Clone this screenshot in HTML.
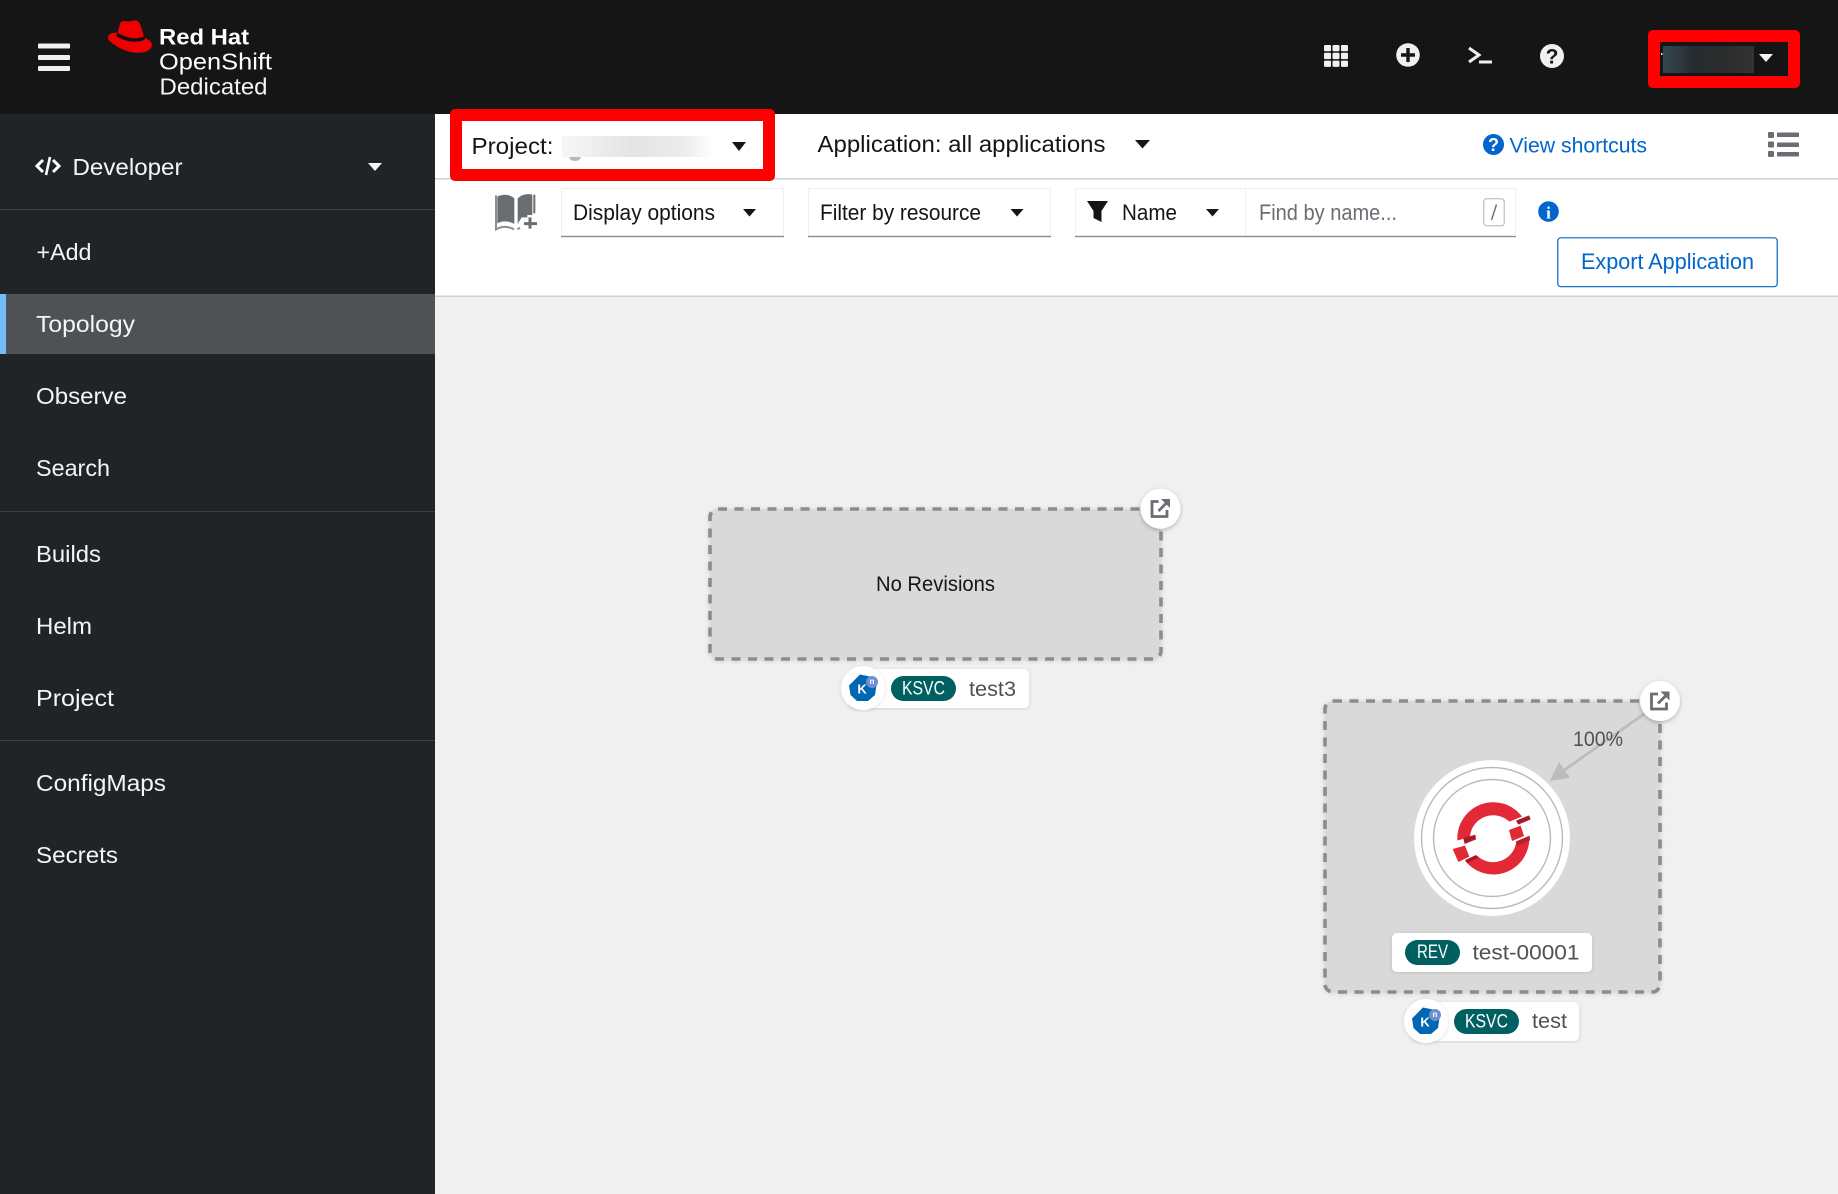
<!DOCTYPE html>
<html lang="en">
<head>
<meta charset="utf-8">
<title>Topology</title>
<style>
html,body{margin:0;padding:0;background:#fff;width:1838px;height:1194px;overflow:hidden}
svg{display:block;font-family:"Liberation Sans",sans-serif}
text{white-space:pre}
</style>
</head>
<body>
<svg width="1838" height="1194" viewBox="0 0 1838 1194" xmlns="http://www.w3.org/2000/svg">
<defs>
<filter id="sh" x="-30%" y="-30%" width="160%" height="170%"><feDropShadow dx="0" dy="1.5" stdDeviation="2" flood-color="#000" flood-opacity=".25"/></filter>
<filter id="sh2" x="-5%" y="-5%" width="110%" height="110%"><feDropShadow dx="0" dy="1" stdDeviation="2" flood-color="#000" flood-opacity=".12"/></filter>
<linearGradient id="pb" x1="0" x2="1" y1="0" y2="0"><stop offset="0" stop-color="#f6f6f6"/><stop offset=".12" stop-color="#f2f2f2"/><stop offset=".45" stop-color="#e4e4e4"/><stop offset=".8" stop-color="#ececec"/><stop offset="1" stop-color="#fff"/></linearGradient>
<linearGradient id="ub" x1="0" x2="1" y1="0" y2="0"><stop offset="0" stop-color="#37474f"/><stop offset=".35" stop-color="#262b2e"/><stop offset=".75" stop-color="#2d2d2d"/><stop offset="1" stop-color="#333"/></linearGradient>
<g id="ext"><path d="M-1.500-7H-8V8H7V1.500" fill="none" stroke="#6a6e73" stroke-width="2.800"/><path d="M-1.500 2.500L7-6" stroke="#6a6e73" stroke-width="2.800" fill="none"/><path d="M1-9.500H10V-.5Z" fill="#6a6e73"/></g>
<g id="kn"><circle cx="0" cy="0" r="22" fill="#fff" filter="url(#sh2)"/><path d="M-3-13.500L7-11.500L13.500-3L12 7L5 13H-6L-12.500 7L-14-2.500Z" fill="#0066b1"/><circle cx="9" cy="-6" r="6" fill="#6c90d2"/><text x="-1" y="5.500" font-size="13" font-weight="700" fill="#fff" text-anchor="middle">K</text><text x="9" y="-3.800" font-size="8" font-weight="700" fill="#fff" text-anchor="middle">n</text></g>
</defs>

<!-- base -->
<rect width="1838" height="1194" fill="#fff"/>
<rect x="435" y="297" width="1403" height="897" fill="#f0f0f0"/>
<rect x="435" y="178" width="1403" height="1.600" fill="#d2d2d2"/>
<rect x="435" y="295.500" width="1403" height="1.600" fill="#d2d2d2"/>

<!-- header -->
<rect width="1838" height="114" fill="#151515"/>
<g fill="#f0f0f0"><rect x="38" y="43.500" width="32" height="5" rx="1"/><rect x="38" y="55" width="32" height="5" rx="1"/><rect x="38" y="66" width="32" height="5" rx="1"/></g>
<g transform="scale(.33333)">
<path d="M362 66C372 60 385 66 392 64C402 60 415 60 420 72C426 88 432 108 432 112C445 118 456 124 456 134C456 150 435 160 412 158C385 160 345 140 326 120C320 108 330 98 345 98L352 100Z" fill="#e00"/>
<path d="M352 98C375 112 410 122 433 108L435 118C410 132 372 124 349 108Z" fill="#111"/>
</g>
<text x="159" y="44.500" font-size="22.500" font-weight="700" fill="#fff" textLength="90" lengthAdjust="spacingAndGlyphs">Red Hat</text>
<text x="159" y="69.500" font-size="23" fill="#fff" textLength="113" lengthAdjust="spacingAndGlyphs">OpenShift</text>
<text x="159.500" y="94.500" font-size="23" fill="#f4f4f4" textLength="108" lengthAdjust="spacingAndGlyphs">Dedicated</text>

<!-- header right -->
<g fill="#f0f0f0">
<rect x="1324" y="45" width="7" height="6.300" rx="1"/><rect x="1332.500" y="45" width="7" height="6.300" rx="1"/><rect x="1341" y="45" width="7" height="6.300" rx="1"/>
<rect x="1324" y="52.800" width="7" height="6.300" rx="1"/><rect x="1332.500" y="52.800" width="7" height="6.300" rx="1"/><rect x="1341" y="52.800" width="7" height="6.300" rx="1"/>
<rect x="1324" y="60.600" width="7" height="6.300" rx="1"/><rect x="1332.500" y="60.600" width="7" height="6.300" rx="1"/><rect x="1341" y="60.600" width="7" height="6.300" rx="1"/>
</g>
<circle cx="1408" cy="55" r="11.800" fill="#f0f0f0"/><path d="M1408 48V62M1401 55H1415" stroke="#151515" stroke-width="3.400"/>
<path d="M1469 48L1479 55L1469 62" fill="none" stroke="#f0f0f0" stroke-width="3"/><path d="M1479 62H1492" stroke="#f0f0f0" stroke-width="3"/>
<circle cx="1552" cy="56" r="12" fill="#f0f0f0"/><text x="1552" y="63.500" font-size="21" font-weight="700" fill="#151515" text-anchor="middle">?</text>
<rect x="1648" y="30" width="152" height="58" rx="5" fill="#f00"/>
<rect x="1660" y="42" width="128" height="34" fill="#151515"/>
<rect x="1663" y="46" width="91" height="27" fill="url(#ub)"/>
<rect x="1661" y="53" width="1.500" height="2" fill="#ddd"/>
<path d="M1759 54H1773L1766 62Z" fill="#f4f4f4"/>

<!-- sidebar -->
<rect x="0" y="114" width="435" height="1080" fill="#212427"/>
<path d="M43 160L37 166L43 172M53 160L59 166L53 172" fill="none" stroke="#fff" stroke-width="3"/><path d="M50 157L46 175" stroke="#fff" stroke-width="2.600"/>
<text x="72.500" y="175" font-size="23" fill="#f5f5f5" textLength="110" lengthAdjust="spacingAndGlyphs">Developer</text>
<path d="M368 163H382L375 171Z" fill="#f5f5f5"/>
<rect x="0" y="209" width="435" height="1" fill="#3c3f42"/>
<g font-size="23" fill="#f5f5f5">
<text x="36.500" y="260" textLength="55" lengthAdjust="spacingAndGlyphs">+Add</text>
<rect x="0" y="294" width="435" height="60" fill="#4f5255"/><rect x="0" y="294" width="6" height="60" fill="#73bcf7"/>
<text x="36" y="332" textLength="99" lengthAdjust="spacingAndGlyphs">Topology</text>
<text x="36" y="404" textLength="91" lengthAdjust="spacingAndGlyphs">Observe</text>
<text x="36" y="476" textLength="74" lengthAdjust="spacingAndGlyphs">Search</text>
<rect x="0" y="511" width="435" height="1" fill="#3c3f42"/>
<text x="36" y="562" textLength="65" lengthAdjust="spacingAndGlyphs">Builds</text>
<text x="36" y="634" textLength="56" lengthAdjust="spacingAndGlyphs">Helm</text>
<text x="36" y="706" textLength="78" lengthAdjust="spacingAndGlyphs">Project</text>
<rect x="0" y="740" width="435" height="1" fill="#3c3f42"/>
<text x="36" y="791" textLength="130" lengthAdjust="spacingAndGlyphs">ConfigMaps</text>
<text x="36" y="863" textLength="82" lengthAdjust="spacingAndGlyphs">Secrets</text>
</g>

<!-- project -->
<rect x="450" y="109" width="325" height="72" rx="5" fill="#f00"/>
<rect x="462" y="121" width="301" height="48" fill="#fff"/>
<text x="471.500" y="154" font-size="23" fill="#151515" textLength="82" lengthAdjust="spacingAndGlyphs">Project:</text>
<rect x="562" y="136" width="152" height="21" fill="url(#pb)"/>
<path d="M569 157h12c-1 3-3 4-6 4s-5-1-6-4z" fill="#9a9a9a" opacity=".7"/>
<path d="M732 142H746L739 151Z" fill="#151515"/>

<text x="817.500" y="152" font-size="23" fill="#151515" textLength="288" lengthAdjust="spacingAndGlyphs">Application: all applications</text>
<path d="M1135 140H1150L1142.500 148.500Z" fill="#151515"/>

<path d="M1493.500 134a10.500 10.500 0 1 0 .01 0z" fill="#06c"/><text x="1493.500" y="151" font-size="18" font-weight="700" fill="#fff" text-anchor="middle">?</text>
<text x="1509.500" y="152.500" font-size="21.500" fill="#06c" textLength="137.500" lengthAdjust="spacingAndGlyphs">View shortcuts</text>
<g fill="#6a6e73">
<rect x="1768" y="132" width="6" height="6" rx="1"/><rect x="1777" y="132.500" width="22" height="4.500" rx=".8"/>
<rect x="1768" y="141.500" width="6" height="6" rx="1"/><rect x="1777" y="142.500" width="22" height="4.500" rx=".8"/>
<rect x="1768" y="151" width="6" height="6" rx="1"/><rect x="1777" y="152" width="22" height="4.500" rx=".8"/>
</g>

<!-- toolbar -->
<g transform="translate(440 100) scale(.33333)">
<path d="M172 290C190 280 210 284 223 295V372C205 362 187 362 172 370Z" fill="#6a6e73"/>
<path d="M233 295C245 284 262 280 277 284V345H262V352H245L233 372Z" fill="#6a6e73"/>
<path d="M168 286V388C185 378 205 378 222 388" fill="none" stroke="#8b8d90" stroke-width="6"/>
<path d="M283 284V340" stroke="#6a6e73" stroke-width="6"/>
<path d="M232 388L240 383" stroke="#8b8d90" stroke-width="6"/>
<path d="M270 352V386M252 371H291" stroke="#6a6e73" stroke-width="9"/>
</g>

<g fill="#fff" stroke="#f0f0f0" stroke-width="1">
<rect x="561.500" y="188.500" width="222" height="48"/>
<rect x="808.500" y="188.500" width="242" height="48"/>
<rect x="1075.500" y="188.500" width="440" height="48"/>
</g>
<path d="M1245.500 188V236" stroke="#f0f0f0"/>
<g fill="#8a8d90"><rect x="561" y="235.800" width="223" height="1.400"/><rect x="808" y="235.800" width="243" height="1.400"/><rect x="1075" y="235.800" width="441" height="1.400"/></g>

<text x="573" y="220" font-size="22" fill="#151515" textLength="142" lengthAdjust="spacingAndGlyphs">Display options</text>
<path d="M743 209H756L749.500 216.500Z" fill="#151515"/>
<text x="820" y="220" font-size="22" fill="#151515" textLength="161" lengthAdjust="spacingAndGlyphs">Filter by resource</text>
<path d="M1010.500 209H1023.500L1017 216.500Z" fill="#151515"/>
<path d="M1087 201H1108L1101.500 211V222L1093.500 218V211Z" fill="#151515"/>
<text x="1122" y="220" font-size="22" fill="#151515" textLength="55" lengthAdjust="spacingAndGlyphs">Name</text>
<path d="M1206 209H1219L1212.500 216.500Z" fill="#151515"/>
<text x="1259" y="220" font-size="22" fill="#6a6e73" textLength="138" lengthAdjust="spacingAndGlyphs">Find by name...</text>
<rect x="1483.700" y="198.700" width="20.600" height="27" rx="3" fill="#fff" stroke="#c6c7c8" stroke-width="1.400"/>
<path d="M1496.500 204.500L1491.500 220" stroke="#6a6e73" stroke-width="1.400"/>
<circle cx="1548.500" cy="211.500" r="10.300" fill="#06c"/>
<text x="1548.500" y="218.500" font-size="17" font-weight="700" fill="#fff" text-anchor="middle" font-family="Liberation Serif">i</text>

<rect x="1557.800" y="237.800" width="219.400" height="48.900" rx="3" fill="#fff" stroke="#06c" stroke-width="1.200"/>
<text x="1581" y="269" font-size="22" fill="#06c" textLength="173" lengthAdjust="spacingAndGlyphs">Export Application</text>

<!-- No Revisions -->
<rect x="710" y="509" width="451" height="150" rx="8" fill="#d9d9d9" stroke="#8b8c8e" stroke-width="3.600" stroke-dasharray="9 7.500" filter="url(#sh2)"/>
<text x="876" y="591" font-size="21" fill="#151515" textLength="119" lengthAdjust="spacingAndGlyphs">No Revisions</text>
<circle cx="1160.500" cy="508.700" r="20" fill="#fff" filter="url(#sh)"/>
<use href="#ext" transform="translate(1160 508.500)"/>

<rect x="850" y="669" width="179" height="39" rx="5" fill="#fff" filter="url(#sh2)"/>
<use href="#kn" transform="translate(863 688)"/>
<rect x="891" y="676" width="65" height="25" rx="12.500" fill="#005f60"/>
<text x="902" y="694.500" font-size="19" fill="#fff" textLength="43" lengthAdjust="spacingAndGlyphs">KSVC</text>
<text x="969" y="696" font-size="21" fill="#4f5255" textLength="47" lengthAdjust="spacingAndGlyphs">test3</text>

<!-- test group -->
<rect x="1325" y="701" width="335" height="291" rx="8" fill="#d9d9d9" stroke="#8b8c8e" stroke-width="3.600" stroke-dasharray="9 7.500" filter="url(#sh2)"/>
<path d="M1644 714L1563 771" stroke="#bcbcbc" stroke-width="2.800"/>
<path d="M1550 780.700L1559 762L1570 778Z" fill="#bcbcbc"/>
<text x="1573" y="746" font-size="21" fill="#4f5255" textLength="50" lengthAdjust="spacingAndGlyphs">100%</text>
<circle cx="1492" cy="838" r="78" fill="#fff"/>
<circle cx="1492" cy="838" r="70.500" fill="none" stroke="#b8bbbe" stroke-width="1.400"/>
<circle cx="1492" cy="838" r="58.500" fill="none" stroke="#b8bbbe" stroke-width="1.400"/>
<g transform="translate(1390 750) scale(.33333)">
<path d="M202.200 272A108 108 0 0 1 396 199.500L358 215A70 70 0 0 0 240 260Z" fill="#e32836"/>
<path d="M417.800 258A108 108 0 0 1 225 332L262 318A70 70 0 0 0 379 274Z" fill="#e32836"/>
<path d="M188 297L225 287L238 320L205 336Z" fill="#e32836"/>
<path d="M357 240L392 227L402 258L366 273Z" fill="#e32836"/>
<path d="M378 212L417 196L422 208L385 224Z" fill="#a71a24"/>
<path d="M220 265L256 254L258 268L224 282Z" fill="#a71a24"/>
<path d="M378 274L419 257L420 271L382 288Z" fill="#b81f2a"/>
<path d="M226 330L258 315L266 322L232 340Z" fill="#a71a24"/>
</g>
<rect x="1392" y="933" width="200" height="39" rx="5" fill="#fff" filter="url(#sh2)"/>
<rect x="1405" y="940" width="55" height="25" rx="12.500" fill="#005f60"/>
<text x="1417" y="958" font-size="19" fill="#fff" textLength="31" lengthAdjust="spacingAndGlyphs">REV</text>
<text x="1472.500" y="959.500" font-size="21" fill="#4f5255" textLength="107" lengthAdjust="spacingAndGlyphs">test-00001</text>
<circle cx="1660" cy="701" r="20" fill="#fff" filter="url(#sh)"/>
<use href="#ext" transform="translate(1659.500 701)"/>

<rect x="1413" y="1002" width="166" height="39" rx="5" fill="#fff" filter="url(#sh2)"/>
<use href="#kn" transform="translate(1426 1021)"/>
<rect x="1454" y="1009" width="65" height="25" rx="12.500" fill="#005f60"/>
<text x="1465" y="1027.500" font-size="19" fill="#fff" textLength="43" lengthAdjust="spacingAndGlyphs">KSVC</text>
<text x="1532" y="1028" font-size="21" fill="#4f5255" textLength="35" lengthAdjust="spacingAndGlyphs">test</text>
</svg>
</body>
</html>
